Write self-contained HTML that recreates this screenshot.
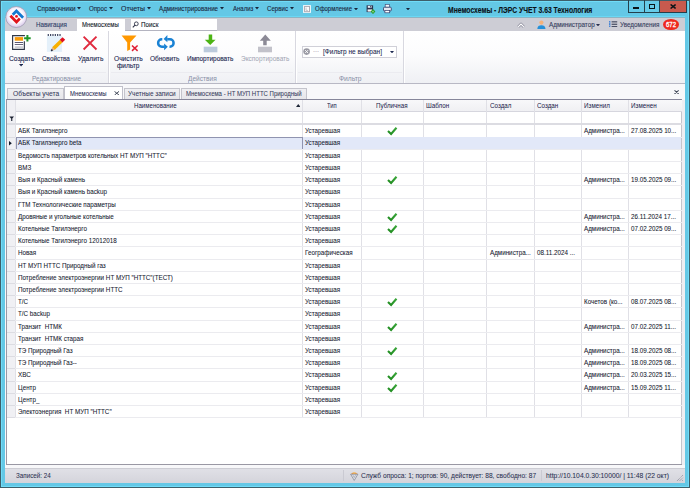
<!DOCTYPE html>
<html><head><meta charset="utf-8">
<style>
*{margin:0;padding:0;box-sizing:border-box}
html,body{width:690px;height:488px;overflow:hidden}
body{position:relative;background:#64c8e6;font-family:"Liberation Sans",sans-serif;color:#1d2340}
.a{position:absolute;display:block}
.t{position:absolute;white-space:nowrap;line-height:12px;height:12px;-webkit-text-stroke:0.12px currentColor}
</style></head><body>
<div class="a" style="left:0px;top:0px;width:690px;height:1px;background:#3d5f6b;"></div>
<div class="a" style="left:0px;top:0px;width:1px;height:488px;background:#3d5f6b;"></div>
<div class="a" style="left:689px;top:0px;width:1px;height:488px;background:#3d5f6b;"></div>
<div class="a" style="left:0px;top:487px;width:690px;height:1px;background:#3d5f6b;"></div>
<div class="a" style="left:1px;top:1px;width:688px;height:1px;background:#70dcf8;"></div>
<div class="a" style="left:1px;top:1px;width:1px;height:486px;background:#70dcf8;"></div>
<div class="a" style="left:688px;top:1px;width:1px;height:486px;background:#70dcf8;"></div>
<div class="a" style="left:1px;top:486px;width:688px;height:1px;background:#70dcf8;"></div>
<div class="a" style="left:5px;top:16px;width:680px;height:1px;background:#6ad8f4;"></div>
<div class="a" style="left:5px;top:17px;width:680px;height:1px;background:#8cb4c4;"></div>
<div class="t" style="left:36.50px;top:3.00px;font-size:6.6px;color:#18263c;transform-origin:0 0;transform:scaleX(0.9629);-webkit-text-stroke:0.1px currentColor;">Справочники</div>
<svg class="a" style="left:77.4px;top:7.4px" width="4" height="2.4" viewBox="0 0 4 2.4"><path d="M0 0H4L2.0 2.4Z" fill="#18263c"/></svg>
<div class="t" style="left:89.00px;top:3.00px;font-size:6.6px;color:#18263c;transform-origin:0 0;transform:scaleX(0.9303);-webkit-text-stroke:0.1px currentColor;">Опрос</div>
<svg class="a" style="left:108.8px;top:7.4px" width="4" height="2.4" viewBox="0 0 4 2.4"><path d="M0 0H4L2.0 2.4Z" fill="#18263c"/></svg>
<div class="t" style="left:121.00px;top:3.00px;font-size:6.6px;color:#18263c;transform-origin:0 0;transform:scaleX(1.0521);-webkit-text-stroke:0.1px currentColor;">Отчеты</div>
<svg class="a" style="left:146.5px;top:7.4px" width="4" height="2.4" viewBox="0 0 4 2.4"><path d="M0 0H4L2.0 2.4Z" fill="#18263c"/></svg>
<div class="t" style="left:158.70px;top:3.00px;font-size:6.6px;color:#18263c;transform-origin:0 0;transform:scaleX(0.9391);-webkit-text-stroke:0.1px currentColor;">Администрирование</div>
<svg class="a" style="left:220.0px;top:7.4px" width="4" height="2.4" viewBox="0 0 4 2.4"><path d="M0 0H4L2.0 2.4Z" fill="#18263c"/></svg>
<div class="t" style="left:232.60px;top:3.00px;font-size:6.6px;color:#18263c;transform-origin:0 0;transform:scaleX(0.9156);-webkit-text-stroke:0.1px currentColor;">Анализ</div>
<svg class="a" style="left:255.0px;top:7.4px" width="4" height="2.4" viewBox="0 0 4 2.4"><path d="M0 0H4L2.0 2.4Z" fill="#18263c"/></svg>
<div class="t" style="left:267.00px;top:3.00px;font-size:6.6px;color:#18263c;transform-origin:0 0;transform:scaleX(0.9292);-webkit-text-stroke:0.1px currentColor;">Сервис</div>
<svg class="a" style="left:290.0px;top:7.4px" width="4" height="2.4" viewBox="0 0 4 2.4"><path d="M0 0H4L2.0 2.4Z" fill="#18263c"/></svg>
<svg class="a" style="left:303px;top:4.8px" width="8" height="8" viewBox="0 0 8 8"><rect x="0.1" y="0.1" width="7.8" height="7.8" fill="#fbfbfb"/><rect x="1.6" y="1.4" width="4.9" height="5.3" fill="none" stroke="#a4a4ae" stroke-width="0.9"/><path d="M3.1 2.6V5.4H5" fill="none" stroke="#b0b0b8" stroke-width="0.7"/></svg>
<div class="t" style="left:314.50px;top:3.00px;font-size:6.6px;color:#18263c;transform-origin:0 0;transform:scaleX(0.9032);-webkit-text-stroke:0.1px currentColor;">Оформление</div>
<svg class="a" style="left:353.5px;top:7.7px" width="4" height="2.4" viewBox="0 0 4 2.4"><path d="M0 0H4L2.0 2.4Z" fill="#18263c"/></svg>
<svg class="a" style="left:366px;top:4.5px" width="10" height="9.5" viewBox="0 0 10 9.5"><rect x="0.6" y="0.3" width="6.5" height="6.8" fill="#2a3450"/><rect x="1.8" y="0.8" width="3.8" height="2" fill="#e8ecf4"/><rect x="4.1" y="1.1" width="0.9" height="1.3" fill="#2a3450"/><rect x="1.6" y="4.4" width="4.6" height="2.2" fill="#f0f2f6"/><path d="M4.6 6.6L7 4.1L9.4 6.6L7 9.1Z" fill="#2aa02a"/><circle cx="7" cy="6.6" r="0.9" fill="#8ad08a"/></svg>
<svg class="a" style="left:382.5px;top:4px" width="9" height="9.5" viewBox="0 0 9 9.5"><rect x="2.2" y="0.5" width="4.2" height="3" fill="#f4f6fa" stroke="#3a4470" stroke-width="0.6"/><rect x="0.5" y="3.2" width="7.8" height="3.8" rx="1" fill="#e4e8f2" stroke="#3a4470" stroke-width="0.9"/><rect x="1.9" y="6.4" width="4.8" height="2.4" fill="#ffffff" stroke="#3a4470" stroke-width="0.7"/></svg>
<svg class="a" style="left:406.4px;top:7.7px" width="4" height="2.4" viewBox="0 0 4 2.4"><path d="M0 0H4L2.0 2.4Z" fill="#18263c"/></svg>
<div class="t" style="left:447.90px;top:4.00px;font-size:8.4px;color:#0a1218;font-weight:bold;transform-origin:0 0;transform:scaleX(0.8102);">Мнемосхемы - ЛЭРС УЧЕТ 3.63 Технология</div>
<div class="a" style="left:628px;top:1px;width:58px;height:11.5px;background:#66cbe8;"></div>
<div class="a" style="left:659.5px;top:1px;width:26.5px;height:11.5px;background:#c85a4e;"></div>
<div class="a" style="left:627.5px;top:0px;width:1px;height:13px;background:#23404c;"></div>
<div class="a" style="left:644px;top:0px;width:1px;height:12.5px;background:#23404c;"></div>
<div class="a" style="left:659px;top:0px;width:1px;height:12.5px;background:#23404c;"></div>
<div class="a" style="left:685.7px;top:0px;width:1px;height:13px;background:#23404c;"></div>
<div class="a" style="left:627.5px;top:12px;width:59px;height:1px;background:#23404c;"></div>
<div class="a" style="left:633.1px;top:6.8px;width:6px;height:2.3px;background:#0a1418;"></div>
<div class="a" style="left:649px;top:4.3px;width:6.2px;height:5px;border:1.4px solid #0a1418;border-top-width:1.9px"></div>
<svg class="a" style="left:669.8px;top:4.4px" width="6.2" height="5" viewBox="0 0 6.2 5"><path d="M0.6 0.5L5.6 4.5M5.6 0.5L0.6 4.5" stroke="#0a1418" stroke-width="1.5"/></svg>
<div class="a" style="left:5px;top:18px;width:680px;height:13px;background:#cdcdd5;"></div>
<div class="a" style="left:77px;top:18.5px;width:48px;height:12.5px;background:#ffffff;"></div>
<div class="t" style="left:36.10px;top:19.00px;font-size:6.7px;color:#2c3a66;transform-origin:0 0;transform:scaleX(0.9336);-webkit-text-stroke:0.1px currentColor;">Навигация</div>
<div class="t" style="left:81.90px;top:19.00px;font-size:6.7px;color:#101828;transform-origin:0 0;transform:scaleX(0.8951);-webkit-text-stroke:0.1px currentColor;">Мнемосхемы</div>
<div class="a" style="left:130.7px;top:18.8px;width:86.7px;height:11.5px;background:#ffffff;"></div>
<div class="a" style="left:125px;top:30.2px;width:92.4px;height:0.8px;background:#b4b4c0;"></div>
<svg class="a" style="left:131.5px;top:20.5px" width="7" height="7.5" viewBox="0 0 7 7.5"><circle cx="4.3" cy="2.8" r="1.9" fill="none" stroke="#303448" stroke-width="0.9"/><path d="M3 4.1L0.8 6.4" stroke="#303448" stroke-width="1.1"/></svg>
<div class="t" style="left:141.20px;top:19.00px;font-size:6.7px;color:#101828;transform-origin:0 0;transform:scaleX(0.9372);-webkit-text-stroke:0.1px currentColor;">Поиск</div>
<svg class="a" style="left:516.8px;top:21.8px" width="8" height="6" viewBox="0 0 8 6"><path d="M1.2 4.8L4 2L6.8 4.8" fill="none" stroke="#8a8a9a" stroke-width="2.6" stroke-linejoin="round"/><path d="M1.2 4.8L4 2L6.8 4.8" fill="none" stroke="#ffffff" stroke-width="1.1" stroke-linejoin="round"/></svg>
<svg class="a" style="left:536.5px;top:19.8px" width="9" height="9.5" viewBox="0 0 9 9.5"><circle cx="4.4" cy="2.6" r="2.1" fill="#f4b27a"/><path d="M0.3 9.3C0.3 6.3 2 5.2 4.4 5.2C6.8 5.2 8.5 6.3 8.5 9.3Z" fill="#2590d8"/></svg>
<div class="t" style="left:548.50px;top:19.00px;font-size:6.7px;color:#343c5c;transform-origin:0 0;transform:scaleX(0.9475);-webkit-text-stroke:0.1px currentColor;">Администратор</div>
<svg class="a" style="left:596.0px;top:23.5px" width="4" height="2.4" viewBox="0 0 4 2.4"><path d="M0 0H4L2.0 2.4Z" fill="#2a3050"/></svg>
<svg class="a" style="left:609px;top:20.8px" width="8.5" height="6.5" viewBox="0 0 8.5 6.5"><rect x="0" y="0" width="1.4" height="6.4" fill="#4a86d4"/><rect x="0" y="1.6" width="1.4" height="0.5" fill="#cdcdd5"/><rect x="0" y="4.1" width="1.4" height="0.5" fill="#cdcdd5"/><rect x="2.6" y="0.3" width="5.6" height="1.1" fill="#3c4258"/><rect x="2.6" y="2.7" width="5.6" height="1.1" fill="#3c4258"/><rect x="2.6" y="5.1" width="5.6" height="1.1" fill="#3c4258"/></svg>
<div class="t" style="left:620.40px;top:19.00px;font-size:6.7px;color:#343c5c;transform-origin:0 0;transform:scaleX(0.9453);-webkit-text-stroke:0.1px currentColor;">Уведомления</div>
<div class="a" style="left:663.2px;top:19.2px;width:15.7px;height:11.1px;border-radius:50%;background:#ee2a1e"></div>
<div class="t" style="left:665.80px;top:19.00px;font-size:6.8px;color:#ffffff;transform-origin:0 0;transform:scaleX(0.8815);-webkit-text-stroke:0.3px currentColor;">672</div>
<svg class="a" style="left:5px;top:6px" width="23" height="23" viewBox="0 0 23 23">
<defs><radialGradient id="lg" cx="50%" cy="45%" r="55%"><stop offset="0" stop-color="#ffffff"/><stop offset="0.6" stop-color="#fbf8fd"/><stop offset="0.85" stop-color="#e6daf2"/><stop offset="1" stop-color="#d6c6ea"/></radialGradient></defs>
<circle cx="11.25" cy="11" r="10.5" fill="url(#lg)" stroke="#a09cb0" stroke-width="0.8"/>
<path d="M7.7 8.7L11.4 5L18.1 11.7" fill="none" stroke="#1478d0" stroke-width="2.8"/>
<path d="M5.4 9.8L11.5 15.9L14.8 12.6" fill="none" stroke="#e0141c" stroke-width="2.8"/>
<circle cx="11.5" cy="10.4" r="1.4" fill="#e8141c"/>
</svg>
<div class="a" style="left:5px;top:31px;width:680px;height:52px;background:linear-gradient(#ffffff,#fcfcfd 45%,#eff0f4);"></div>
<div class="a" style="left:5px;top:82.5px;width:680px;height:1px;background:#b8b8c4;"></div>
<div class="a" style="left:108px;top:31px;width:1px;height:52px;background:#d8d8e0;"></div>
<div class="a" style="left:109px;top:31px;width:1px;height:52px;background:#ffffff;"></div>
<div class="a" style="left:295px;top:31px;width:1px;height:52px;background:#d8d8e0;"></div>
<div class="a" style="left:296px;top:31px;width:1px;height:52px;background:#ffffff;"></div>
<div class="a" style="left:403px;top:31px;width:1px;height:52px;background:#d8d8e0;"></div>
<div class="a" style="left:404px;top:31px;width:1px;height:52px;background:#ffffff;"></div>
<div class="a" style="left:7px;top:72px;width:99px;height:1px;background:#ebebf0;"></div>
<div class="a" style="left:111px;top:72px;width:182px;height:1px;background:#ebebf0;"></div>
<div class="a" style="left:298px;top:72px;width:104px;height:1px;background:#ebebf0;"></div>
<div class="t" style="left:31.80px;top:73.00px;font-size:6.5px;color:#8890a6;transform-origin:0 0;transform:scaleX(0.9917);-webkit-text-stroke:0;">Редактирование</div>
<div class="t" style="left:188.30px;top:73.00px;font-size:6.5px;color:#8890a6;transform-origin:0 0;transform:scaleX(1.0078);-webkit-text-stroke:0;">Действия</div>
<div class="t" style="left:338.60px;top:73.00px;font-size:6.5px;color:#8890a6;transform-origin:0 0;transform:scaleX(1.0350);-webkit-text-stroke:0;">Фильтр</div>
<div class="t" style="left:8.90px;top:53.00px;font-size:6.85px;color:#1e2a52;transform-origin:0 0;transform:scaleX(0.9720);">Создать</div>
<svg class="a" style="left:19.2px;top:64.3px" width="4.2" height="2.5" viewBox="0 0 4.2 2.5"><path d="M0 0H4.2L2.1 2.5Z" fill="#1e2a52"/></svg>
<div class="t" style="left:41.50px;top:53.00px;font-size:6.85px;color:#1e2a52;transform-origin:0 0;transform:scaleX(0.9276);">Свойства</div>
<div class="t" style="left:77.50px;top:53.00px;font-size:6.85px;color:#1e2a52;transform-origin:0 0;transform:scaleX(0.9713);">Удалить</div>
<div class="t" style="left:114.00px;top:53.00px;font-size:6.85px;color:#1e2a52;transform-origin:0 0;transform:scaleX(0.9659);">Очистить</div>
<div class="t" style="left:117.10px;top:60.00px;font-size:6.85px;color:#1e2a52;transform-origin:0 0;transform:scaleX(0.9514);">фильтр</div>
<div class="t" style="left:150.10px;top:53.00px;font-size:6.85px;color:#1e2a52;transform-origin:0 0;transform:scaleX(0.9479);">Обновить</div>
<div class="t" style="left:186.60px;top:53.00px;font-size:6.85px;color:#1e2a52;transform-origin:0 0;transform:scaleX(0.9408);">Импортировать</div>
<div class="t" style="left:240.70px;top:53.00px;font-size:6.85px;color:#a0a4b2;transform-origin:0 0;transform:scaleX(0.9490);-webkit-text-stroke:0;">Экспортировать</div>
<svg class="a" style="left:11px;top:34px" width="21" height="17" viewBox="0 0 21 17">
<rect x="1.6" y="1.6" width="11.75" height="13.75" fill="#ffffff"/>
<path d="M13.9 1.6H1.6V15.35H13.35V7.2" fill="none" stroke="#303848" stroke-width="1.15"/>
<rect x="3.75" y="3.1" width="8.35" height="3.6" fill="#f79a0a"/>
<rect x="3.75" y="8.1" width="8.35" height="0.9" fill="#4a4660"/>
<rect x="3.75" y="10.1" width="8.35" height="0.9" fill="#5a5670"/>
<rect x="3.75" y="12.6" width="8.35" height="0.9" fill="#a0a0ac"/>
<path d="M16.4 0.9V7.5M13.1 4.2H19.7" stroke="#22962a" stroke-width="2"/>
</svg>
<svg class="a" style="left:46px;top:34px" width="20" height="18" viewBox="0 0 20 18">
<rect x="0.9" y="2" width="15.1" height="15.9" fill="#e4f0fa"/>
<rect x="1.70" y="0" width="1.15" height="2" fill="#343c5a"/><rect x="4.05" y="0" width="1.15" height="2" fill="#343c5a"/><rect x="6.40" y="0" width="1.15" height="2" fill="#343c5a"/><rect x="8.75" y="0" width="1.15" height="2" fill="#343c5a"/><rect x="11.10" y="0" width="1.15" height="2" fill="#343c5a"/><rect x="13.45" y="0" width="1.15" height="2" fill="#343c5a"/>
<path d="M7.4 14.6L15.3 7" stroke="#f8b000" stroke-width="3.7"/>
<path d="M15.1 7.2L17.9 4.5" stroke="#e01020" stroke-width="3.7"/>
<path d="M6.2 15.8L7.6 14.4" stroke="#e8b080" stroke-width="2.6"/>
<path d="M5.2 16.8L6.4 15.6" stroke="#202438" stroke-width="1.7"/>
</svg>
<svg class="a" style="left:82px;top:35px" width="16" height="16" viewBox="0 0 16 16"><path d="M1.6 1.6L14.5 14.5M14.5 1.6L1.6 14.5" stroke="#e02a3e" stroke-width="1.9"/></svg>
<svg class="a" style="left:120.5px;top:34.5px" width="18" height="17" viewBox="0 0 18 17">
<path d="M0.6 0.4H15.5L9.1 7.4V14.6L6.2 16.1V7.4Z" fill="#ff9800"/>
<path d="M11 10.5L16.6 15.9M16.6 10.5L11 15.9" stroke="#e01e34" stroke-width="1.5"/>
</svg>
<svg class="a" style="left:155.5px;top:34px" width="20" height="17" viewBox="0 0 20 17">
<path d="M6.3 5.35H5.8A3.7 3.7 0 0 0 5.8 12.75H8.6" fill="none" stroke="#1a82d4" stroke-width="2.5"/>
<path d="M11.2 5.35H13.9A3.7 3.7 0 0 1 13.9 12.75H13.5" fill="none" stroke="#1a82d4" stroke-width="2.5"/>
<path d="M8.1 9.6L8.1 16.3L11.8 12.8Z" fill="#1a82d4"/>
<path d="M11.4 0.9L11.4 8.3L7.6 5.1Z" fill="#1a82d4"/>
</svg>
<svg class="a" style="left:202.5px;top:33.5px" width="15" height="19.5" viewBox="0 0 15 19.5">
<path d="M5.7 0.6H9.2V5.8H12.6L7.2 11.1L1.8 5.8H5.7Z" fill="#4cb414"/>
<rect x="0.7" y="12.7" width="13.7" height="5.6" fill="#bccadc"/>
</svg>
<svg class="a" style="left:258px;top:33.5px" width="15" height="19.5" viewBox="0 0 15 19.5">
<path d="M5.2 11.3H8.7V6.7H12.8L7.3 0.6L1.8 6.7H5.2Z" fill="#8c8a96"/>
<rect x="0" y="12.7" width="14" height="5.6" fill="#c2c2ca"/>
</svg>
<div class="a" style="left:301.5px;top:46px;width:95.5px;height:11.5px;background:#ffffff;border:1px solid #d0d0d8"></div>
<svg class="a" style="left:302.5px;top:48px" width="7.5" height="7.5" viewBox="0 0 7.5 7.5"><circle cx="3.6" cy="3.6" r="3.3" fill="#9a9aa4"/><path d="M2.1 2.1L5.1 5.1M5.1 2.1L2.1 5.1" stroke="#ffffff" stroke-width="0.9"/></svg>
<div class="t" style="left:312.60px;top:46.00px;font-size:6.5px;color:#b8b8c0;transform-origin:0 0;transform:scaleX(0.9395);">···</div>
<div class="t" style="left:322.70px;top:46.00px;font-size:6.7px;color:#1e2a52;transform-origin:0 0;transform:scaleX(0.9730);-webkit-text-stroke:0.08px currentColor;">[Фильтр не выбран]</div>
<svg class="a" style="left:390.3px;top:50.8px" width="4" height="2.4" viewBox="0 0 4 2.4"><path d="M0 0H4L2.0 2.4Z" fill="#1e2a52"/></svg>
<div class="a" style="left:5px;top:83.5px;width:680px;height:384.5px;background:#f8f8fa;"></div>
<div class="a" style="left:7.2px;top:87.6px;width:57.0px;height:11.900000000000006px;background:linear-gradient(#f0f0f3,#e6e6ea);border:1px solid #c4c4cc;border-bottom:none"></div>
<div class="t" style="left:12.60px;top:88.00px;font-size:6.5px;color:#343a5a;transform-origin:0 0;transform:scaleX(1.0229);-webkit-text-stroke:0.05px currentColor;">Объекты учета</div>
<div class="a" style="left:123.6px;top:87.6px;width:56.400000000000006px;height:11.900000000000006px;background:linear-gradient(#f0f0f3,#e6e6ea);border:1px solid #c4c4cc;border-bottom:none"></div>
<div class="t" style="left:127.90px;top:88.00px;font-size:6.5px;color:#343a5a;transform-origin:0 0;transform:scaleX(0.9896);-webkit-text-stroke:0.05px currentColor;">Учетные записи</div>
<div class="a" style="left:180.8px;top:87.6px;width:126.69999999999999px;height:11.900000000000006px;background:linear-gradient(#f0f0f3,#e6e6ea);border:1px solid #c4c4cc;border-bottom:none"></div>
<div class="t" style="left:185.90px;top:88.00px;font-size:6.5px;color:#343a5a;transform-origin:0 0;transform:scaleX(0.9262);-webkit-text-stroke:0.05px currentColor;">Мнемосхема - НТ МУП НТТС Природный</div>
<div class="a" style="left:64.2px;top:86.2px;width:58.8px;height:13.299999999999997px;background:#ffffff;border:1px solid #c0c0ca;border-bottom:none"></div>
<div class="t" style="left:69.60px;top:88.00px;font-size:6.5px;color:#1e2a52;transform-origin:0 0;transform:scaleX(0.9152);-webkit-text-stroke:0.05px currentColor;">Мнемосхемы</div>
<svg class="a" style="left:114px;top:90.5px" width="5.5" height="4.5" viewBox="0 0 5.5 4.5"><path d="M0.5 0.4L5 4.1M5 0.4L0.5 4.1" stroke="#404858" stroke-width="1"/></svg>
<svg class="a" style="left:673.7px;top:90.2px" width="5.2" height="4.3" viewBox="0 0 5.2 4.3"><path d="M0.5 0.4L4.7 3.9M4.7 0.4L0.5 3.9" stroke="#404858" stroke-width="1.1"/></svg>
<div class="a" style="left:5.5px;top:99px;width:676.5px;height:365.5px;background:#ffffff;border:1px solid #9a98a4;border-top-color:#86869a"></div>
<div class="a" style="left:680.6px;top:100px;width:1.2px;height:364px;background:#c4c4cc;"></div>
<div class="a" style="left:682px;top:99.5px;width:3px;height:365px;background:#eeeef2;"></div>
<div class="a" style="left:6.5px;top:100px;width:675px;height:11px;background:linear-gradient(#f8f8fa,#f0f0f3);"></div>
<div class="a" style="left:6.5px;top:111px;width:675px;height:1px;background:#d6d6de;"></div>
<div class="a" style="left:7px;top:100px;width:8.3px;height:317.5px;background:#f0f0f4;"></div>
<div class="a" style="left:15px;top:100px;width:1px;height:317.5px;background:#e0e0e6;"></div>
<div class="a" style="left:302px;top:100px;width:1px;height:317.5px;background:#e0e0e6;"></div>
<div class="a" style="left:361px;top:100px;width:1px;height:317.5px;background:#e0e0e6;"></div>
<div class="a" style="left:423px;top:100px;width:1px;height:317.5px;background:#e0e0e6;"></div>
<div class="a" style="left:486px;top:100px;width:1px;height:317.5px;background:#e0e0e6;"></div>
<div class="a" style="left:534px;top:100px;width:1px;height:317.5px;background:#e0e0e6;"></div>
<div class="a" style="left:581px;top:100px;width:1px;height:317.5px;background:#e0e0e6;"></div>
<div class="a" style="left:628px;top:100px;width:1px;height:317.5px;background:#e0e0e6;"></div>
<div class="a" style="left:6.5px;top:123px;width:675px;height:1.6px;background:#dcdce2;"></div>
<div class="t" style="left:134.10px;top:100.00px;font-size:6.5px;color:#182048;transform-origin:0 0;transform:scaleX(0.9455);-webkit-text-stroke:0;">Наименование</div>
<svg class="a" style="left:295.6px;top:104.1px" width="4.5" height="3" viewBox="0 0 4.5 3"><path d="M0 3H4.5L2.25 0Z" fill="#202838"/></svg>
<div class="t" style="left:327.40px;top:100.00px;font-size:6.5px;color:#182048;transform-origin:0 0;transform:scaleX(0.8952);-webkit-text-stroke:0;">Тип</div>
<div class="t" style="left:376.00px;top:100.00px;font-size:6.5px;color:#182048;transform-origin:0 0;transform:scaleX(0.9557);-webkit-text-stroke:0;">Публичная</div>
<div class="t" style="left:425.80px;top:100.00px;font-size:6.5px;color:#182048;transform-origin:0 0;transform:scaleX(0.9650);-webkit-text-stroke:0;">Шаблон</div>
<div class="t" style="left:489.80px;top:100.00px;font-size:6.5px;color:#182048;transform-origin:0 0;transform:scaleX(0.9650);-webkit-text-stroke:0;">Создал</div>
<div class="t" style="left:537.00px;top:100.00px;font-size:6.5px;color:#182048;transform-origin:0 0;transform:scaleX(0.9650);-webkit-text-stroke:0;">Создан</div>
<div class="t" style="left:583.80px;top:100.00px;font-size:6.5px;color:#182048;transform-origin:0 0;transform:scaleX(0.9650);-webkit-text-stroke:0;">Изменил</div>
<div class="t" style="left:631.00px;top:100.00px;font-size:6.5px;color:#182048;transform-origin:0 0;transform:scaleX(0.9650);-webkit-text-stroke:0;">Изменен</div>
<svg class="a" style="left:8.5px;top:115.6px" width="5.5" height="5.5" viewBox="0 0 5.5 5.5"><path d="M0.3 0.4H5.1L2.7 3.3Z" fill="#1a2030"/><rect x="2.2" y="2.6" width="1.1" height="2.4" fill="#1a2030"/></svg>
<svg class="a" width="0" height="0" style="left:0;top:0"><defs><linearGradient id="cg" x1="0" y1="1" x2="1" y2="0"><stop offset="0" stop-color="#1e8a1e"/><stop offset="1" stop-color="#3aa63a"/></linearGradient></defs></svg>
<div class="a" style="left:6.5px;top:136.5px;width:675px;height:1px;background:#ebebef;"></div>
<div class="a" style="left:7px;top:136.5px;width:8.3px;height:1px;background:#dcdce2;"></div>
<div class="t" style="left:18.00px;top:125.00px;font-size:6.5px;color:#14182e;transform-origin:0 0;transform:scaleX(0.9650);white-space:pre;-webkit-text-stroke:0.06px currentColor;">АБК Тагилэнерго</div>
<div class="t" style="left:305.30px;top:125.00px;font-size:6.5px;color:#14182e;transform-origin:0 0;transform:scaleX(0.9650);white-space:pre;-webkit-text-stroke:0.06px currentColor;">Устаревшая</div>
<svg class="a" style="left:386px;top:125.3px" width="12" height="11" viewBox="0 0 12 11"><path d="M2 6L5.1 9L10.5 2.8" fill="none" stroke="url(#cg)" stroke-width="2.1"/></svg>
<div class="t" style="left:583.80px;top:125.00px;font-size:6.5px;color:#14182e;transform-origin:0 0;transform:scaleX(0.9650);white-space:pre;-webkit-text-stroke:0.06px currentColor;">Администра...</div>
<div class="t" style="left:631.00px;top:125.00px;font-size:6.5px;color:#14182e;transform-origin:0 0;transform:scaleX(0.9650);white-space:pre;-webkit-text-stroke:0.06px currentColor;">27.08.2025 10...</div>
<div class="a" style="left:16.3px;top:137px;width:665.2px;height:12px;background:#e2e8f8;"></div>
<div class="a" style="left:15.8px;top:137px;width:287px;height:12.5px;border:1px solid #9094b0"></div>
<svg class="a" style="left:9.4px;top:141.01500000000001px" width="3" height="4.6" viewBox="0 0 3 4.6"><path d="M0 0V4.6L2.8 2.3Z" fill="#101828"/></svg>
<div class="a" style="left:6.5px;top:148.5px;width:675px;height:1px;background:#ebebef;"></div>
<div class="a" style="left:7px;top:148.5px;width:8.3px;height:1px;background:#dcdce2;"></div>
<div class="t" style="left:18.00px;top:137.00px;font-size:6.5px;color:#14182e;transform-origin:0 0;transform:scaleX(0.9650);white-space:pre;-webkit-text-stroke:0.06px currentColor;">АБК Тагилэнерго beta</div>
<div class="t" style="left:305.30px;top:137.00px;font-size:6.5px;color:#14182e;transform-origin:0 0;transform:scaleX(0.9650);white-space:pre;-webkit-text-stroke:0.06px currentColor;">Устаревшая</div>
<div class="a" style="left:6.5px;top:160.5px;width:675px;height:1px;background:#ebebef;"></div>
<div class="a" style="left:7px;top:160.5px;width:8.3px;height:1px;background:#dcdce2;"></div>
<div class="t" style="left:18.00px;top:150.00px;font-size:6.5px;color:#14182e;transform-origin:0 0;transform:scaleX(0.9650);white-space:pre;-webkit-text-stroke:0.06px currentColor;">Ведомость параметров котельных НТ МУП &quot;НТТС&quot;</div>
<div class="t" style="left:305.30px;top:150.00px;font-size:6.5px;color:#14182e;transform-origin:0 0;transform:scaleX(0.9650);white-space:pre;-webkit-text-stroke:0.06px currentColor;">Устаревшая</div>
<div class="a" style="left:6.5px;top:172.5px;width:675px;height:1px;background:#ebebef;"></div>
<div class="a" style="left:7px;top:172.5px;width:8.3px;height:1px;background:#dcdce2;"></div>
<div class="t" style="left:18.00px;top:162.00px;font-size:6.5px;color:#14182e;transform-origin:0 0;transform:scaleX(0.9650);white-space:pre;-webkit-text-stroke:0.06px currentColor;">ВМЗ</div>
<div class="t" style="left:305.30px;top:162.00px;font-size:6.5px;color:#14182e;transform-origin:0 0;transform:scaleX(0.9650);white-space:pre;-webkit-text-stroke:0.06px currentColor;">Устаревшая</div>
<div class="a" style="left:6.5px;top:184.5px;width:675px;height:1px;background:#ebebef;"></div>
<div class="a" style="left:7px;top:184.5px;width:8.3px;height:1px;background:#dcdce2;"></div>
<div class="t" style="left:18.00px;top:174.00px;font-size:6.5px;color:#14182e;transform-origin:0 0;transform:scaleX(0.9650);white-space:pre;-webkit-text-stroke:0.06px currentColor;">Выя и Красный камень</div>
<div class="t" style="left:305.30px;top:174.00px;font-size:6.5px;color:#14182e;transform-origin:0 0;transform:scaleX(0.9650);white-space:pre;-webkit-text-stroke:0.06px currentColor;">Устаревшая</div>
<svg class="a" style="left:386px;top:174.14px" width="12" height="11" viewBox="0 0 12 11"><path d="M2 6L5.1 9L10.5 2.8" fill="none" stroke="url(#cg)" stroke-width="2.1"/></svg>
<div class="t" style="left:583.80px;top:174.00px;font-size:6.5px;color:#14182e;transform-origin:0 0;transform:scaleX(0.9650);white-space:pre;-webkit-text-stroke:0.06px currentColor;">Администра...</div>
<div class="t" style="left:631.00px;top:174.00px;font-size:6.5px;color:#14182e;transform-origin:0 0;transform:scaleX(0.9650);white-space:pre;-webkit-text-stroke:0.06px currentColor;">19.05.2025 09...</div>
<div class="a" style="left:6.5px;top:197.5px;width:675px;height:1px;background:#ebebef;"></div>
<div class="a" style="left:7px;top:197.5px;width:8.3px;height:1px;background:#dcdce2;"></div>
<div class="t" style="left:18.00px;top:186.00px;font-size:6.5px;color:#14182e;transform-origin:0 0;transform:scaleX(0.9650);white-space:pre;-webkit-text-stroke:0.06px currentColor;">Выя и Красный камень backup</div>
<div class="t" style="left:305.30px;top:186.00px;font-size:6.5px;color:#14182e;transform-origin:0 0;transform:scaleX(0.9650);white-space:pre;-webkit-text-stroke:0.06px currentColor;">Устаревшая</div>
<div class="a" style="left:6.5px;top:209.5px;width:675px;height:1px;background:#ebebef;"></div>
<div class="a" style="left:7px;top:209.5px;width:8.3px;height:1px;background:#dcdce2;"></div>
<div class="t" style="left:18.00px;top:199.00px;font-size:6.5px;color:#14182e;transform-origin:0 0;transform:scaleX(0.9650);white-space:pre;-webkit-text-stroke:0.06px currentColor;">ГТМ Технологические параметры</div>
<div class="t" style="left:305.30px;top:199.00px;font-size:6.5px;color:#14182e;transform-origin:0 0;transform:scaleX(0.9650);white-space:pre;-webkit-text-stroke:0.06px currentColor;">Устаревшая</div>
<div class="a" style="left:6.5px;top:221.5px;width:675px;height:1px;background:#ebebef;"></div>
<div class="a" style="left:7px;top:221.5px;width:8.3px;height:1px;background:#dcdce2;"></div>
<div class="t" style="left:18.00px;top:211.00px;font-size:6.5px;color:#14182e;transform-origin:0 0;transform:scaleX(0.9650);white-space:pre;-webkit-text-stroke:0.06px currentColor;">Дровяные и угольные котельные</div>
<div class="t" style="left:305.30px;top:211.00px;font-size:6.5px;color:#14182e;transform-origin:0 0;transform:scaleX(0.9650);white-space:pre;-webkit-text-stroke:0.06px currentColor;">Устаревшая</div>
<svg class="a" style="left:386px;top:210.76999999999998px" width="12" height="11" viewBox="0 0 12 11"><path d="M2 6L5.1 9L10.5 2.8" fill="none" stroke="url(#cg)" stroke-width="2.1"/></svg>
<div class="t" style="left:583.80px;top:211.00px;font-size:6.5px;color:#14182e;transform-origin:0 0;transform:scaleX(0.9650);white-space:pre;-webkit-text-stroke:0.06px currentColor;">Администра...</div>
<div class="t" style="left:631.00px;top:211.00px;font-size:6.5px;color:#14182e;transform-origin:0 0;transform:scaleX(0.9650);white-space:pre;-webkit-text-stroke:0.06px currentColor;">26.11.2024 17...</div>
<div class="a" style="left:6.5px;top:233.5px;width:675px;height:1px;background:#ebebef;"></div>
<div class="a" style="left:7px;top:233.5px;width:8.3px;height:1px;background:#dcdce2;"></div>
<div class="t" style="left:18.00px;top:223.00px;font-size:6.5px;color:#14182e;transform-origin:0 0;transform:scaleX(0.9650);white-space:pre;-webkit-text-stroke:0.06px currentColor;">Котельные Тагилэнерго</div>
<div class="t" style="left:305.30px;top:223.00px;font-size:6.5px;color:#14182e;transform-origin:0 0;transform:scaleX(0.9650);white-space:pre;-webkit-text-stroke:0.06px currentColor;">Устаревшая</div>
<svg class="a" style="left:386px;top:222.98000000000002px" width="12" height="11" viewBox="0 0 12 11"><path d="M2 6L5.1 9L10.5 2.8" fill="none" stroke="url(#cg)" stroke-width="2.1"/></svg>
<div class="t" style="left:583.80px;top:223.00px;font-size:6.5px;color:#14182e;transform-origin:0 0;transform:scaleX(0.9650);white-space:pre;-webkit-text-stroke:0.06px currentColor;">Администра...</div>
<div class="t" style="left:631.00px;top:223.00px;font-size:6.5px;color:#14182e;transform-origin:0 0;transform:scaleX(0.9650);white-space:pre;-webkit-text-stroke:0.06px currentColor;">07.02.2025 09...</div>
<div class="a" style="left:6.5px;top:245.5px;width:675px;height:1px;background:#ebebef;"></div>
<div class="a" style="left:7px;top:245.5px;width:8.3px;height:1px;background:#dcdce2;"></div>
<div class="t" style="left:18.00px;top:235.00px;font-size:6.5px;color:#14182e;transform-origin:0 0;transform:scaleX(0.9650);white-space:pre;-webkit-text-stroke:0.06px currentColor;">Котельные Тагилэнерго 12012018</div>
<div class="t" style="left:305.30px;top:235.00px;font-size:6.5px;color:#14182e;transform-origin:0 0;transform:scaleX(0.9650);white-space:pre;-webkit-text-stroke:0.06px currentColor;">Устаревшая</div>
<div class="a" style="left:6.5px;top:258.5px;width:675px;height:1px;background:#ebebef;"></div>
<div class="a" style="left:7px;top:258.5px;width:8.3px;height:1px;background:#dcdce2;"></div>
<div class="t" style="left:18.00px;top:247.00px;font-size:6.5px;color:#14182e;transform-origin:0 0;transform:scaleX(0.9650);white-space:pre;-webkit-text-stroke:0.06px currentColor;">Новая</div>
<div class="t" style="left:305.30px;top:247.00px;font-size:6.5px;color:#14182e;transform-origin:0 0;transform:scaleX(0.9650);white-space:pre;-webkit-text-stroke:0.06px currentColor;">Географическая</div>
<div class="t" style="left:489.60px;top:247.00px;font-size:6.5px;color:#14182e;transform-origin:0 0;transform:scaleX(0.9650);white-space:pre;-webkit-text-stroke:0.06px currentColor;">Администра...</div>
<div class="t" style="left:536.50px;top:247.00px;font-size:6.5px;color:#14182e;transform-origin:0 0;transform:scaleX(0.9650);white-space:pre;-webkit-text-stroke:0.06px currentColor;">08.11.2024 ...</div>
<div class="a" style="left:6.5px;top:270.5px;width:675px;height:1px;background:#ebebef;"></div>
<div class="a" style="left:7px;top:270.5px;width:8.3px;height:1px;background:#dcdce2;"></div>
<div class="t" style="left:18.00px;top:260.00px;font-size:6.5px;color:#14182e;transform-origin:0 0;transform:scaleX(0.9650);white-space:pre;-webkit-text-stroke:0.06px currentColor;">НТ МУП НТТС Природный газ</div>
<div class="t" style="left:305.30px;top:260.00px;font-size:6.5px;color:#14182e;transform-origin:0 0;transform:scaleX(0.9650);white-space:pre;-webkit-text-stroke:0.06px currentColor;">Устаревшая</div>
<div class="a" style="left:6.5px;top:282.5px;width:675px;height:1px;background:#ebebef;"></div>
<div class="a" style="left:7px;top:282.5px;width:8.3px;height:1px;background:#dcdce2;"></div>
<div class="t" style="left:18.00px;top:272.00px;font-size:6.5px;color:#14182e;transform-origin:0 0;transform:scaleX(0.9650);white-space:pre;-webkit-text-stroke:0.06px currentColor;">Потребление электроэнергии НТ МУП &quot;НТТС&quot;(ТЕСТ)</div>
<div class="t" style="left:305.30px;top:272.00px;font-size:6.5px;color:#14182e;transform-origin:0 0;transform:scaleX(0.9650);white-space:pre;-webkit-text-stroke:0.06px currentColor;">Устаревшая</div>
<div class="a" style="left:6.5px;top:294.5px;width:675px;height:1px;background:#ebebef;"></div>
<div class="a" style="left:7px;top:294.5px;width:8.3px;height:1px;background:#dcdce2;"></div>
<div class="t" style="left:18.00px;top:284.00px;font-size:6.5px;color:#14182e;transform-origin:0 0;transform:scaleX(0.9650);white-space:pre;-webkit-text-stroke:0.06px currentColor;">Потребление электроэнергии НТТС</div>
<div class="t" style="left:305.30px;top:284.00px;font-size:6.5px;color:#14182e;transform-origin:0 0;transform:scaleX(0.9650);white-space:pre;-webkit-text-stroke:0.06px currentColor;">Устаревшая</div>
<div class="a" style="left:6.5px;top:306.5px;width:675px;height:1px;background:#ebebef;"></div>
<div class="a" style="left:7px;top:306.5px;width:8.3px;height:1px;background:#dcdce2;"></div>
<div class="t" style="left:18.00px;top:296.00px;font-size:6.5px;color:#14182e;transform-origin:0 0;transform:scaleX(0.9650);white-space:pre;-webkit-text-stroke:0.06px currentColor;">Т/С</div>
<div class="t" style="left:305.30px;top:296.00px;font-size:6.5px;color:#14182e;transform-origin:0 0;transform:scaleX(0.9650);white-space:pre;-webkit-text-stroke:0.06px currentColor;">Устаревшая</div>
<svg class="a" style="left:386px;top:296.24px" width="12" height="11" viewBox="0 0 12 11"><path d="M2 6L5.1 9L10.5 2.8" fill="none" stroke="url(#cg)" stroke-width="2.1"/></svg>
<div class="t" style="left:583.80px;top:296.00px;font-size:6.5px;color:#14182e;transform-origin:0 0;transform:scaleX(0.9650);white-space:pre;-webkit-text-stroke:0.06px currentColor;">Кочетов (ко...</div>
<div class="t" style="left:631.00px;top:296.00px;font-size:6.5px;color:#14182e;transform-origin:0 0;transform:scaleX(0.9650);white-space:pre;-webkit-text-stroke:0.06px currentColor;">08.07.2025 08...</div>
<div class="a" style="left:6.5px;top:319.5px;width:675px;height:1px;background:#ebebef;"></div>
<div class="a" style="left:7px;top:319.5px;width:8.3px;height:1px;background:#dcdce2;"></div>
<div class="t" style="left:18.00px;top:308.00px;font-size:6.5px;color:#14182e;transform-origin:0 0;transform:scaleX(0.9650);white-space:pre;-webkit-text-stroke:0.06px currentColor;">T/C backup</div>
<div class="t" style="left:305.30px;top:308.00px;font-size:6.5px;color:#14182e;transform-origin:0 0;transform:scaleX(0.9650);white-space:pre;-webkit-text-stroke:0.06px currentColor;">Устаревшая</div>
<div class="a" style="left:6.5px;top:331.5px;width:675px;height:1px;background:#ebebef;"></div>
<div class="a" style="left:7px;top:331.5px;width:8.3px;height:1px;background:#dcdce2;"></div>
<div class="t" style="left:18.00px;top:321.00px;font-size:6.5px;color:#14182e;transform-origin:0 0;transform:scaleX(0.9650);white-space:pre;-webkit-text-stroke:0.06px currentColor;">Транзит  НТМК</div>
<div class="t" style="left:305.30px;top:321.00px;font-size:6.5px;color:#14182e;transform-origin:0 0;transform:scaleX(0.9650);white-space:pre;-webkit-text-stroke:0.06px currentColor;">Устаревшая</div>
<svg class="a" style="left:386px;top:320.66px" width="12" height="11" viewBox="0 0 12 11"><path d="M2 6L5.1 9L10.5 2.8" fill="none" stroke="url(#cg)" stroke-width="2.1"/></svg>
<div class="t" style="left:583.80px;top:321.00px;font-size:6.5px;color:#14182e;transform-origin:0 0;transform:scaleX(0.9650);white-space:pre;-webkit-text-stroke:0.06px currentColor;">Администра...</div>
<div class="t" style="left:631.00px;top:321.00px;font-size:6.5px;color:#14182e;transform-origin:0 0;transform:scaleX(0.9650);white-space:pre;-webkit-text-stroke:0.06px currentColor;">07.02.2025 11...</div>
<div class="a" style="left:6.5px;top:343.5px;width:675px;height:1px;background:#ebebef;"></div>
<div class="a" style="left:7px;top:343.5px;width:8.3px;height:1px;background:#dcdce2;"></div>
<div class="t" style="left:18.00px;top:333.00px;font-size:6.5px;color:#14182e;transform-origin:0 0;transform:scaleX(0.9650);white-space:pre;-webkit-text-stroke:0.06px currentColor;">Транзит  НТМК старая</div>
<div class="t" style="left:305.30px;top:333.00px;font-size:6.5px;color:#14182e;transform-origin:0 0;transform:scaleX(0.9650);white-space:pre;-webkit-text-stroke:0.06px currentColor;">Устаревшая</div>
<div class="a" style="left:6.5px;top:355.5px;width:675px;height:1px;background:#ebebef;"></div>
<div class="a" style="left:7px;top:355.5px;width:8.3px;height:1px;background:#dcdce2;"></div>
<div class="t" style="left:18.00px;top:345.00px;font-size:6.5px;color:#14182e;transform-origin:0 0;transform:scaleX(0.9650);white-space:pre;-webkit-text-stroke:0.06px currentColor;">ТЭ Природный Газ</div>
<div class="t" style="left:305.30px;top:345.00px;font-size:6.5px;color:#14182e;transform-origin:0 0;transform:scaleX(0.9650);white-space:pre;-webkit-text-stroke:0.06px currentColor;">Устаревшая</div>
<svg class="a" style="left:386px;top:345.08000000000004px" width="12" height="11" viewBox="0 0 12 11"><path d="M2 6L5.1 9L10.5 2.8" fill="none" stroke="url(#cg)" stroke-width="2.1"/></svg>
<div class="t" style="left:583.80px;top:345.00px;font-size:6.5px;color:#14182e;transform-origin:0 0;transform:scaleX(0.9650);white-space:pre;-webkit-text-stroke:0.06px currentColor;">Администра...</div>
<div class="t" style="left:631.00px;top:345.00px;font-size:6.5px;color:#14182e;transform-origin:0 0;transform:scaleX(0.9650);white-space:pre;-webkit-text-stroke:0.06px currentColor;">18.09.2025 08...</div>
<div class="a" style="left:6.5px;top:367.5px;width:675px;height:1px;background:#ebebef;"></div>
<div class="a" style="left:7px;top:367.5px;width:8.3px;height:1px;background:#dcdce2;"></div>
<div class="t" style="left:18.00px;top:357.00px;font-size:6.5px;color:#14182e;transform-origin:0 0;transform:scaleX(0.9650);white-space:pre;-webkit-text-stroke:0.06px currentColor;">ТЭ Природный Газ--</div>
<div class="t" style="left:305.30px;top:357.00px;font-size:6.5px;color:#14182e;transform-origin:0 0;transform:scaleX(0.9650);white-space:pre;-webkit-text-stroke:0.06px currentColor;">Устаревшая</div>
<div class="t" style="left:583.80px;top:357.00px;font-size:6.5px;color:#14182e;transform-origin:0 0;transform:scaleX(0.9650);white-space:pre;-webkit-text-stroke:0.06px currentColor;">Администра...</div>
<div class="t" style="left:631.00px;top:357.00px;font-size:6.5px;color:#14182e;transform-origin:0 0;transform:scaleX(0.9650);white-space:pre;-webkit-text-stroke:0.06px currentColor;">18.09.2025 08...</div>
<div class="a" style="left:6.5px;top:380.5px;width:675px;height:1px;background:#ebebef;"></div>
<div class="a" style="left:7px;top:380.5px;width:8.3px;height:1px;background:#dcdce2;"></div>
<div class="t" style="left:18.00px;top:369.00px;font-size:6.5px;color:#14182e;transform-origin:0 0;transform:scaleX(0.9650);white-space:pre;-webkit-text-stroke:0.06px currentColor;">ХВС</div>
<div class="t" style="left:305.30px;top:369.00px;font-size:6.5px;color:#14182e;transform-origin:0 0;transform:scaleX(0.9650);white-space:pre;-webkit-text-stroke:0.06px currentColor;">Устаревшая</div>
<svg class="a" style="left:386px;top:369.5px" width="12" height="11" viewBox="0 0 12 11"><path d="M2 6L5.1 9L10.5 2.8" fill="none" stroke="url(#cg)" stroke-width="2.1"/></svg>
<div class="t" style="left:583.80px;top:369.00px;font-size:6.5px;color:#14182e;transform-origin:0 0;transform:scaleX(0.9650);white-space:pre;-webkit-text-stroke:0.06px currentColor;">Администра...</div>
<div class="t" style="left:631.00px;top:369.00px;font-size:6.5px;color:#14182e;transform-origin:0 0;transform:scaleX(0.9650);white-space:pre;-webkit-text-stroke:0.06px currentColor;">20.03.2025 15...</div>
<div class="a" style="left:6.5px;top:392.5px;width:675px;height:1px;background:#ebebef;"></div>
<div class="a" style="left:7px;top:392.5px;width:8.3px;height:1px;background:#dcdce2;"></div>
<div class="t" style="left:18.00px;top:382.00px;font-size:6.5px;color:#14182e;transform-origin:0 0;transform:scaleX(0.9650);white-space:pre;-webkit-text-stroke:0.06px currentColor;">Центр</div>
<div class="t" style="left:305.30px;top:382.00px;font-size:6.5px;color:#14182e;transform-origin:0 0;transform:scaleX(0.9650);white-space:pre;-webkit-text-stroke:0.06px currentColor;">Устаревшая</div>
<svg class="a" style="left:386px;top:381.71000000000004px" width="12" height="11" viewBox="0 0 12 11"><path d="M2 6L5.1 9L10.5 2.8" fill="none" stroke="url(#cg)" stroke-width="2.1"/></svg>
<div class="t" style="left:583.80px;top:382.00px;font-size:6.5px;color:#14182e;transform-origin:0 0;transform:scaleX(0.9650);white-space:pre;-webkit-text-stroke:0.06px currentColor;">Администра...</div>
<div class="t" style="left:631.00px;top:382.00px;font-size:6.5px;color:#14182e;transform-origin:0 0;transform:scaleX(0.9650);white-space:pre;-webkit-text-stroke:0.06px currentColor;">15.09.2025 11...</div>
<div class="a" style="left:6.5px;top:404.5px;width:675px;height:1px;background:#ebebef;"></div>
<div class="a" style="left:7px;top:404.5px;width:8.3px;height:1px;background:#dcdce2;"></div>
<div class="t" style="left:18.00px;top:394.00px;font-size:6.5px;color:#14182e;transform-origin:0 0;transform:scaleX(0.9650);white-space:pre;-webkit-text-stroke:0.06px currentColor;">Центр_</div>
<div class="t" style="left:305.30px;top:394.00px;font-size:6.5px;color:#14182e;transform-origin:0 0;transform:scaleX(0.9650);white-space:pre;-webkit-text-stroke:0.06px currentColor;">Устаревшая</div>
<div class="a" style="left:6.5px;top:416.5px;width:675px;height:1px;background:#ebebef;"></div>
<div class="a" style="left:7px;top:416.5px;width:8.3px;height:1px;background:#dcdce2;"></div>
<div class="t" style="left:18.00px;top:406.00px;font-size:6.5px;color:#14182e;transform-origin:0 0;transform:scaleX(0.9650);white-space:pre;-webkit-text-stroke:0.06px currentColor;">Электоэнергия  НТ МУП &quot;НТТС&quot;</div>
<div class="t" style="left:305.30px;top:406.00px;font-size:6.5px;color:#14182e;transform-origin:0 0;transform:scaleX(0.9650);white-space:pre;-webkit-text-stroke:0.06px currentColor;">Устаревшая</div>
<div class="a" style="left:5px;top:464.5px;width:680px;height:3.5px;background:#f8f8fa;"></div>
<div class="a" style="left:5px;top:467.5px;width:680px;height:15px;background:linear-gradient(#e0e0e6,#d4d4db);border-top:1px solid #cdcdd4;"></div>
<div class="t" style="left:16.20px;top:470.00px;font-size:6.6px;color:#2a3050;transform-origin:0 0;transform:scaleX(0.9513);-webkit-text-stroke:0.05px currentColor;">Записей: 24</div>
<div class="a" style="left:342.5px;top:470px;width:1px;height:11px;background:#cacad2;"></div>
<svg class="a" style="left:349.5px;top:470.5px" width="9" height="10" viewBox="0 0 9 10"><path d="M0.6 3.2Q4.25 -0.6 7.9 3.2Z" fill="#f0a048"/><path d="M3 2.2Q4.25 1 5.5 2.2Z" fill="#ffe070"/><path d="M0.6 3.2H7.9L4.25 9.4Z" fill="#e4e6ec" stroke="#7a8090" stroke-width="0.7" stroke-linejoin="round"/><path d="M2.6 3.4L4.25 6.6L5.9 3.4" fill="none" stroke="#8a90a0" stroke-width="0.6"/></svg>
<div class="t" style="left:360.90px;top:470.00px;font-size:6.6px;color:#2a3050;-webkit-text-stroke:0.05px currentColor;">Служб опроса: 1; портов: 90, действует: 88, свободно: 87</div>
<div class="a" style="left:540.5px;top:470px;width:1px;height:11px;background:#cacad2;"></div>
<div class="t" style="left:545.50px;top:470.00px;font-size:6.6px;color:#2a3050;transform-origin:0 0;transform:scaleX(1.0271);-webkit-text-stroke:0.05px currentColor;">http://10.104.0.30:10000/ | 11:48 (22 окт)</div>
<svg class="a" style="left:676px;top:474px" width="8" height="8" viewBox="0 0 8 8"><path d="M1 7L7 1M3.5 7L7 3.5M6 7L7 6" stroke="#707080" stroke-width="0.8" stroke-dasharray="0.9 0.9"/></svg>
</body></html>
